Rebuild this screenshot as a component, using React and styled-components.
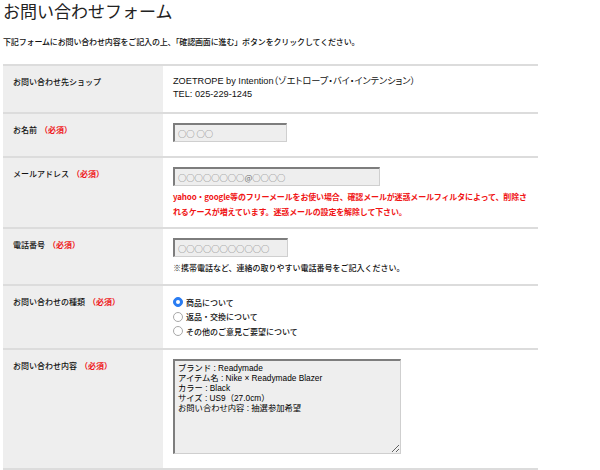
import React from "react";
import styled, { createGlobalStyle } from "styled-components";

const Global = createGlobalStyle`
  html, body { margin: 0; padding: 0; background: #fff; }
  body { font-family: "Liberation Sans", "Noto Sans CJK JP", sans-serif; color: #111; }
`;

const Page = styled.div`
  width: 600px;
  padding: 0 0 0 3px;
  box-sizing: border-box;
`;

const Title = styled.h1`
  margin: 0;
  font-family: "Noto Sans CJK JP", sans-serif;
  font-weight: 400;
  font-size: 17px;
  line-height: 21px;
  color: #222;
`;

const Intro = styled.p`
  margin: 15px 0 16px;
  font-family: "Noto Sans CJK JP", sans-serif;
  font-weight: 500;
  font-size: 8px;
  line-height: 12px;
  letter-spacing: -0.15px;
  color: #111;
`;

const Table = styled.div`
  width: 535px;
  border-bottom: 2px solid #dcdcdc;
`;

const Row = styled.div`
  display: grid;
  grid-template-columns: 160px 1fr;
  border-top: 2px solid #dcdcdc;
  min-height: ${(p) => p.$h}px;
  box-sizing: border-box;
`;

const Label = styled.div`
  background: #eeeeee;
  padding: 10px 10px;
  font-family: "Noto Sans CJK JP", sans-serif;
  font-weight: 500;
  font-size: 8px;
  line-height: 12px;
  color: #111;
`;

const Required = styled.span`
  color: #ee1620;
  font-weight: 700;
  margin-left: 3px;
`;

const Field = styled.div`
  padding: 9px 10px 8px;
  font-size: 8px;
  line-height: 13px;
  color: #111;
`;

const Text = styled.div`
  font-family: "Liberation Sans", "Noto Sans CJK JP", sans-serif;
  font-size: 9.2px;
  line-height: 13px;
  color: #111;
  font-feature-settings: "palt";
  white-space: nowrap;
`;

const Input = styled.div`
  width: ${(p) => p.$w}px;
  height: 19px;
  box-sizing: border-box;
  background: #eeeeee;
  border-top: 2px solid #7d7d7d;
  border-left: 2px solid #7d7d7d;
  border-right: 1px solid #cfcfcf;
  border-bottom: 1px solid #cfcfcf;
  padding: 0 3px;
  font-family: "Noto Sans CJK JP", sans-serif;
  font-size: 8.3px;
  line-height: 16px;
  color: #6c6c6c;
  white-space: nowrap;
  overflow: hidden;
`;

const Note = styled.div`
  margin-top: 4px;
  font-family: "Noto Sans CJK JP", sans-serif;
  font-size: 8px;
  line-height: ${(p) => (p.$alert ? 14.5 : 14)}px;
  font-weight: ${(p) => (p.$alert ? 700 : 500)};
  color: ${(p) => (p.$alert ? "#f01414" : "#111")};
  letter-spacing: ${(p) => (p.$alert ? "-0.15px" : "0")};
  white-space: nowrap;
`;

const RadioList = styled.div`
  display: flex;
  flex-direction: column;
`;

const RadioRow = styled.label`
  display: flex;
  align-items: center;
  height: 14.5px;
  font-family: "Noto Sans CJK JP", sans-serif;
  font-weight: 500;
  font-size: 8px;
  color: #111;
`;

const RadioDot = styled.span`
  width: 10px;
  height: 10px;
  box-sizing: border-box;
  border-radius: 50%;
  margin-right: 3px;
  display: inline-flex;
  align-items: center;
  justify-content: center;
  background: ${(p) => (p.$checked ? "#2a7cf2" : "#fff")};
  border: 1px solid ${(p) => (p.$checked ? "#2a7cf2" : "#a8a8a8")};
  &::after {
    content: "";
    width: 4px;
    height: 4px;
    border-radius: 50%;
    background: ${(p) => (p.$checked ? "#fff" : "transparent")};
  }
`;

const TextArea = styled.textarea`
  display: block;
  width: 228px;
  height: 95px;
  margin: 0;
  box-sizing: border-box;
  background: #eeeeee;
  border-top: 2px solid #7d7d7d;
  border-left: 2px solid #7d7d7d;
  border-right: 1px solid #cfcfcf;
  border-bottom: 1px solid #cfcfcf;
  padding: 2px 3px;
  font-family: "Liberation Sans", "Noto Sans CJK JP", sans-serif;
  font-size: 8.3px;
  line-height: 10px;
  color: #000;
  outline: none;
  resize: both;
  overflow: hidden;
`;

const rows = [
  { label: "お問い合わせ先ショップ", h: 48, req: false, kind: "shop" },
  { label: "お名前", h: 44, req: true, kind: "name" },
  { label: "メールアドレス", h: 70, req: true, kind: "mail" },
  { label: "電話番号", h: 57, req: true, kind: "tel" },
  { label: "お問い合わせの種類", h: 64, req: true, kind: "type" },
  { label: "お問い合わせ内容", h: 120, req: true, kind: "body" },
];

const message =
  "ブランド : Readymade\nアイテム名 : Nike × Readymade Blazer\nカラー : Black\nサイズ : US9（27.0cm）\nお問い合わせ内容 : 抽選参加希望";

function renderField(kind) {
  switch (kind) {
    case "shop":
      return (
        <>
          <Text>ZOETROPE by Intention（ゾエトロープ・バイ・インテンション）</Text>
          <Text>TEL: 025-229-1245</Text>
        </>
      );
    case "name":
      return <Input $w={114}>○○ ○○</Input>;
    case "mail":
      return (
        <>
          <Input $w={207}>○○○○○○○○@○○○○</Input>
          <Note $alert>
            yahoo・google等のフリーメールをお使い場合、確認メールが迷惑メールフィルタによって、削除さ
            <br />
            れるケースが増えています。迷惑メールの設定を解除して下さい。
          </Note>
        </>
      );
    case "tel":
      return (
        <>
          <Input $w={115}>○○○○○○○○○○○</Input>
          <Note>※携帯電話など、連絡の取りやすい電話番号をご記入ください。</Note>
        </>
      );
    case "type":
      return (
        <RadioList>
          {["商品について", "返品・交換について", "その他のご意見ご要望について"].map((t, i) => (
            <RadioRow key={t}>
              <RadioDot $checked={i === 0} />
              {t}
            </RadioRow>
          ))}
        </RadioList>
      );
    case "body":
      return <TextArea readOnly spellCheck={false} defaultValue={message} />;
    default:
      return null;
  }
}

export default function App() {
  return (
    <>
      <Global />
      <Page>
        <Title>お問い合わせフォーム</Title>
        <Intro>下記フォームにお問い合わせ内容をご記入の上、「確認画面に進む」ボタンをクリックしてください。</Intro>
        <Table>
          {rows.map((r) => (
            <Row key={r.kind} $h={r.h}>
              <Label>
                {r.label}
                {r.req && <Required>（必須）</Required>}
              </Label>
              <Field>{renderField(r.kind)}</Field>
            </Row>
          ))}
        </Table>
      </Page>
    </>
  );
}
